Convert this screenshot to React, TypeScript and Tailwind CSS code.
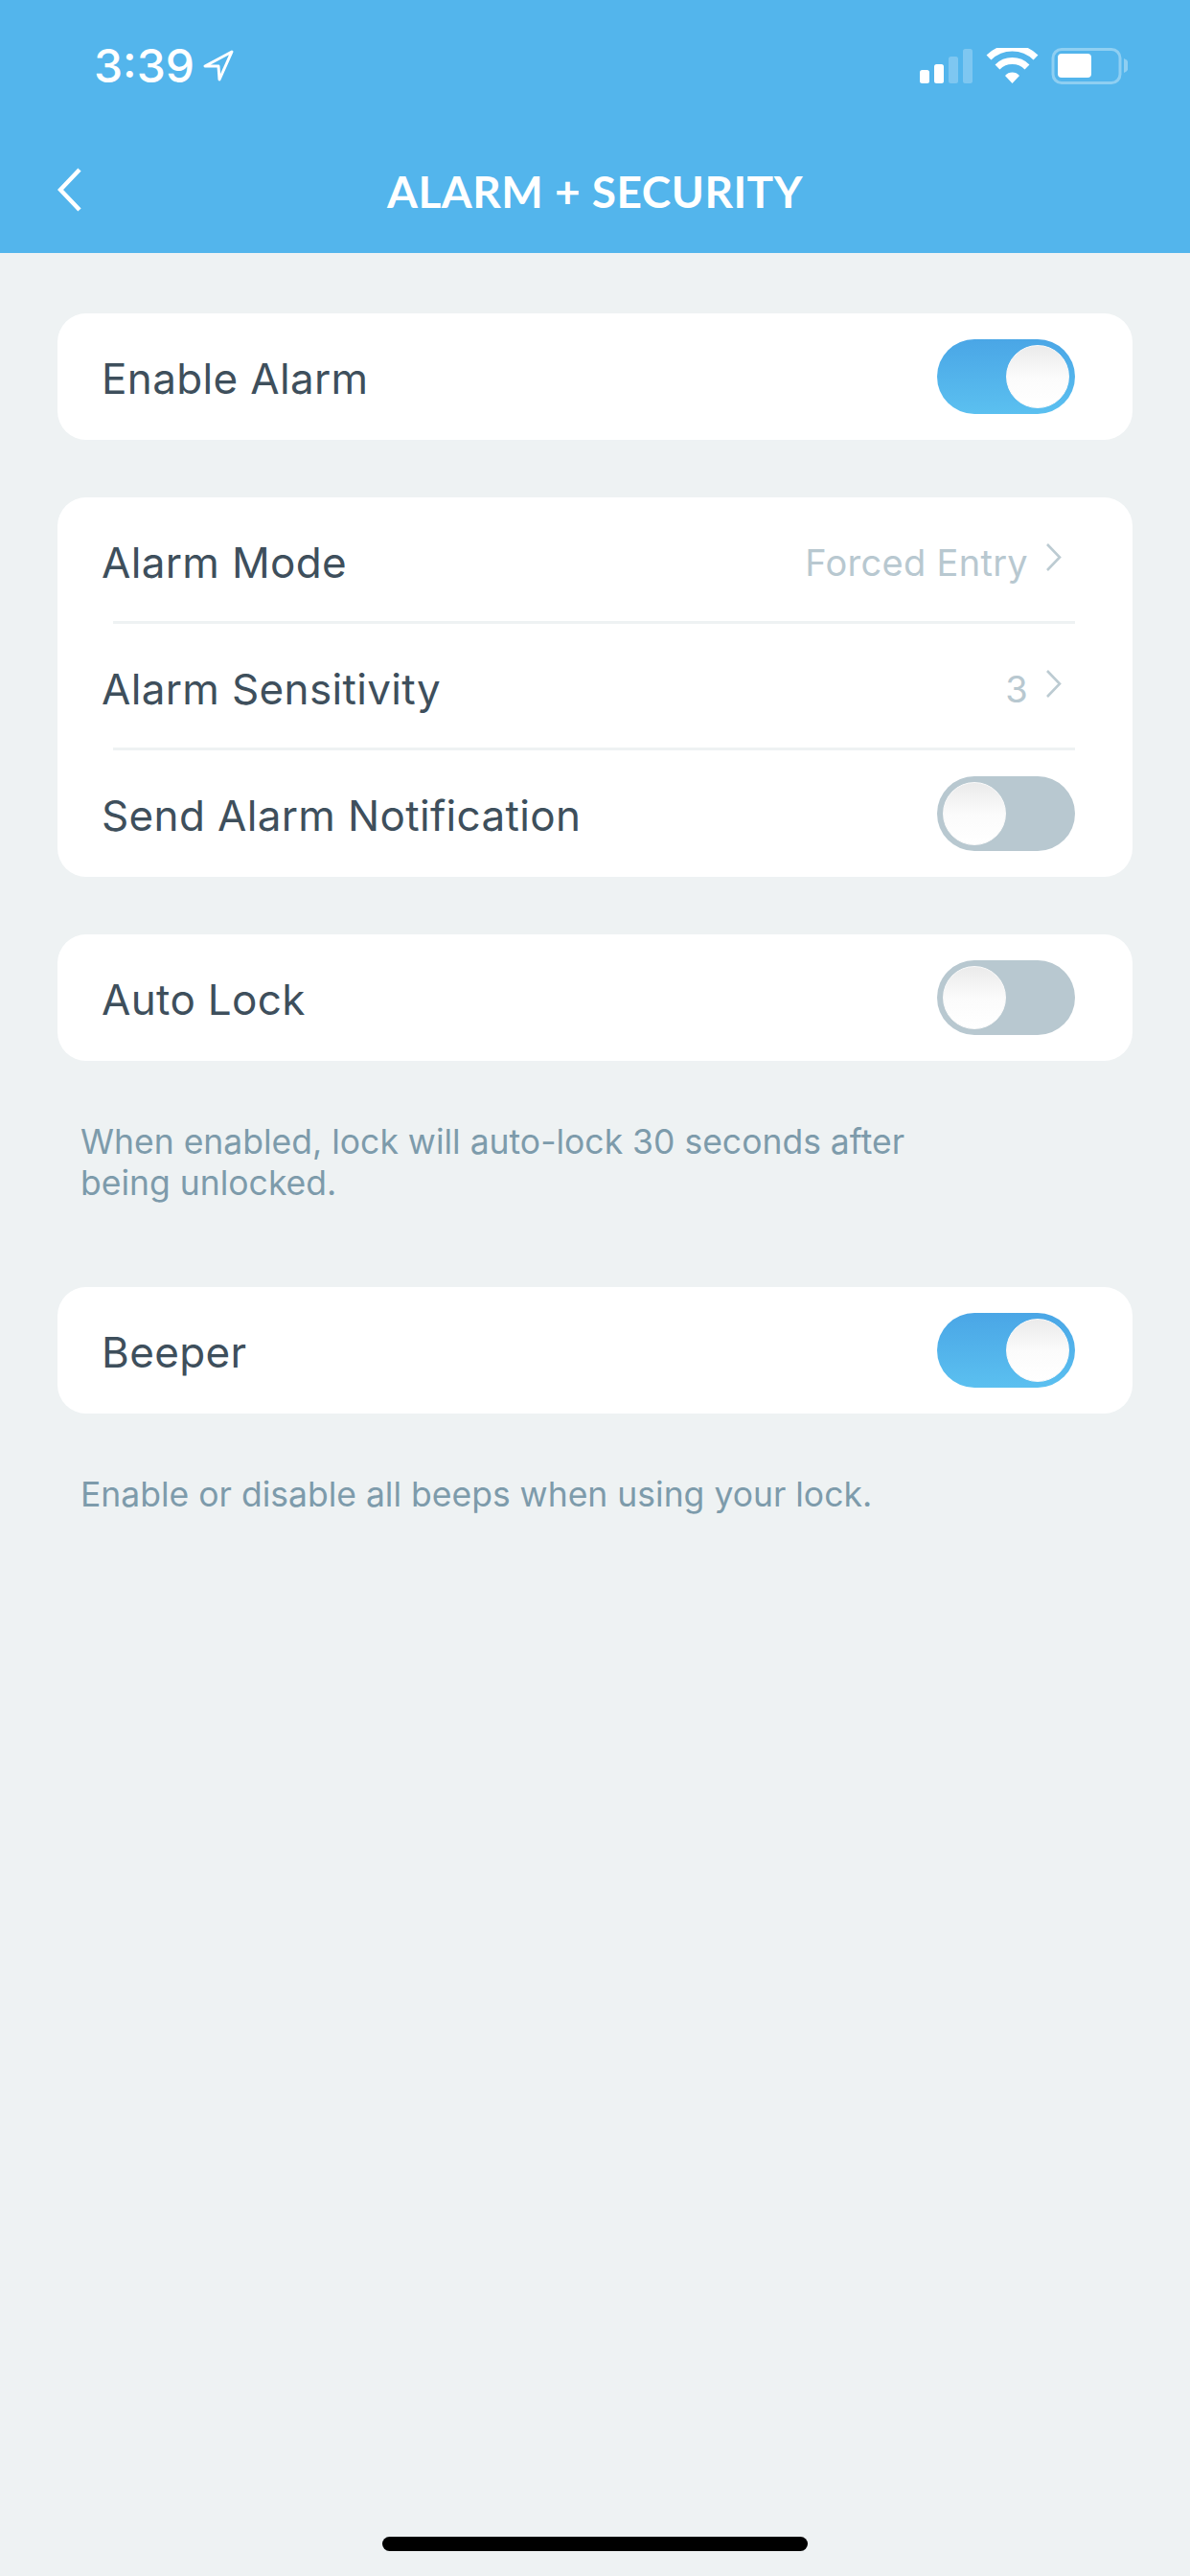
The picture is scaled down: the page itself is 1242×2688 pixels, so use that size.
function Toggle({ on }: { on: boolean }) {
  return (
    <div
      className={`w-[144px] h-[78px] rounded-full p-[6px] flex ${
        on ? 'justify-end bg-gradient-to-b from-[#4aa6e6] to-[#5bc0f0]' : 'justify-start bg-[#b8c8d0]'
      }`}
    >
      <div className="w-[66px] h-[66px] rounded-full bg-gradient-to-b from-[#ebebeb] via-[#fbfbfb] to-white border border-[#fafafa]" />
    </div>
  );
}

function Chevron() {
  return (
    <svg width="17" height="32" viewBox="0 0 17 32" fill="none" className="mb-[6px]">
      <path d="M2 2 L15 15.5 L2 29" stroke="#bccbd2" strokeWidth="2.6" />
    </svg>
  );
}

function Row({ label, children, last }: { label: string; children: React.ReactNode; last?: boolean }) {
  return (
    <div className="relative h-[132px] pl-[46px] pr-[60px] flex items-center justify-between">
      <span className="mt-[3px] text-[44px] tracking-[0.35px] text-[#3e4f5c]">{label}</span>
      {children}
      {!last && <div className="absolute left-[58px] right-[60px] bottom-0 h-[3px] bg-[#eef2f3]" />}
    </div>
  );
}

function Value({ text }: { text: string }) {
  return (
    <div className="flex items-center gap-[18px] mr-[14px]">
      <span className="mt-[5px] text-[38px] tracking-[0.3px] text-[#b8c8d0]">{text}</span>
      <Chevron />
    </div>
  );
}

export default function App() {
  return (
    <div className="w-[1242px] h-[2688px] bg-[#eef2f3] flex flex-col font-['Inter',sans-serif]">
      {/* Header */}
      <div className="h-[264px] bg-[#53b5ec] text-white flex flex-col">
        <div className="flex items-center justify-between pl-[98px] pr-[65px] pt-[42px] h-[96px]">
          <div className="flex items-center gap-[8px]">
            <span className="text-[48px] leading-none font-medium">3:39</span>
            <svg width="34" height="34" viewBox="0 0 34 34" fill="none">
              <path d="M31 2 L3 17 L17 17 L18 31 Z" stroke="white" strokeWidth="3" strokeLinejoin="round" />
            </svg>
          </div>
          <svg width="217" height="38" viewBox="0 0 217 38" fill="none">
            <rect x="0" y="23" width="10" height="14" rx="2.5" fill="white" />
            <rect x="15" y="17" width="10" height="20" rx="2.5" fill="white" />
            <rect x="30" y="9" width="10" height="28" rx="2.5" fill="white" fillOpacity="0.25" />
            <rect x="45" y="1" width="10" height="36" rx="2.5" fill="white" fillOpacity="0.25" />
            <path d="M72 10 A35 35 0 0 1 121 10" stroke="white" strokeWidth="7" />
            <path d="M81 20 A22 22 0 0 1 112 20" stroke="white" strokeWidth="7" />
            <path d="M89 29 A10 10 0 0 1 104 29 L96.5 37 Z" fill="white" />
            <rect x="139" y="1.5" width="70" height="35" rx="9" stroke="white" strokeOpacity="0.35" strokeWidth="3" />
            <rect x="144" y="6" width="35" height="25" rx="4" fill="white" />
            <path d="M213 11 A8 8 0 0 1 213 26 Z" fill="white" fillOpacity="0.35" />
          </svg>
        </div>
        <div className="relative flex-1 flex items-center justify-center pt-[38px]">
          <svg width="26" height="46" viewBox="0 0 26 46" fill="none" className="absolute left-[60px] top-[79px]">
            <path d="M23 2 L3 23 L23 44" stroke="white" strokeWidth="4.5" />
          </svg>
          <span className="text-[46px] font-bold tracking-[0.5px] font-['Lato',sans-serif]">ALARM + SECURITY</span>
        </div>
      </div>

      {/* Settings */}
      <div className="px-[60px] pt-[63px] flex flex-col">
        <div className="bg-white rounded-[30px]">
          <Row label="Enable Alarm" last>
            <Toggle on />
          </Row>
        </div>

        <div className="bg-white rounded-[30px] mt-[60px]">
          <Row label="Alarm Mode">
            <Value text="Forced Entry" />
          </Row>
          <Row label="Alarm Sensitivity">
            <Value text="3" />
          </Row>
          <Row label="Send Alarm Notification" last>
            <Toggle on={false} />
          </Row>
        </div>

        <div className="bg-white rounded-[30px] mt-[60px]">
          <Row label="Auto Lock" last>
            <Toggle on={false} />
          </Row>
        </div>
        <p className="mt-[63px] pl-[24px] w-[960px] text-[35.5px] leading-[43px] text-[#7d9bab]">
          When enabled, lock will auto-lock 30 seconds after being unlocked.
        </p>

        <div className="bg-white rounded-[30px] mt-[87px]">
          <Row label="Beeper" last>
            <Toggle on />
          </Row>
        </div>
        <p className="mt-[63px] pl-[24px] text-[35.5px] leading-[43px] text-[#7d9bab]">
          Enable or disable all beeps when using your lock.
        </p>
      </div>

      {/* Home indicator */}
      <div className="mt-auto mb-[26px] self-center w-[444px] h-[15px] rounded-full bg-black" />
    </div>
  );
}
